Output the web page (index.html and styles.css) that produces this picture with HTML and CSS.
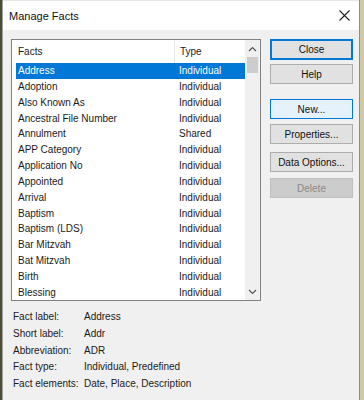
FILE: index.html
```html
<!DOCTYPE html>
<html lang="en">
  <head>
    <meta charset="utf-8">
    <title>Manage Facts</title>
    <link rel="stylesheet" href="styles.css">
  </head>
  <body>
    <div class="dialog">
      <div class="titlebar">
        <span class="title">Manage Facts</span>
        <svg class="close-x" width="11" height="11" viewBox="0 0 11 11">
          <path d="M0.5 0.5 L10.5 10.5 M10.5 0.5 L0.5 10.5" stroke="#222" stroke-width="1.1" fill="none"/>
        </svg>
      </div>
      <div class="content">
        <div class="listbox">
          <div class="list">
            <div class="header">
              <div class="col col-fact">Facts</div>
              <div class="col col-type">Type</div>
            </div>
            <div class="row selected"><div class="col col-fact">Address</div><div class="col col-type">Individual</div></div>
            <div class="row"><div class="col col-fact">Adoption</div><div class="col col-type">Individual</div></div>
            <div class="row"><div class="col col-fact">Also Known As</div><div class="col col-type">Individual</div></div>
            <div class="row"><div class="col col-fact">Ancestral File Number</div><div class="col col-type">Individual</div></div>
            <div class="row"><div class="col col-fact">Annulment</div><div class="col col-type">Shared</div></div>
            <div class="row"><div class="col col-fact">APP Category</div><div class="col col-type">Individual</div></div>
            <div class="row"><div class="col col-fact">Application No</div><div class="col col-type">Individual</div></div>
            <div class="row"><div class="col col-fact">Appointed</div><div class="col col-type">Individual</div></div>
            <div class="row"><div class="col col-fact">Arrival</div><div class="col col-type">Individual</div></div>
            <div class="row"><div class="col col-fact">Baptism</div><div class="col col-type">Individual</div></div>
            <div class="row"><div class="col col-fact">Baptism (LDS)</div><div class="col col-type">Individual</div></div>
            <div class="row"><div class="col col-fact">Bar Mitzvah</div><div class="col col-type">Individual</div></div>
            <div class="row"><div class="col col-fact">Bat Mitzvah</div><div class="col col-type">Individual</div></div>
            <div class="row"><div class="col col-fact">Birth</div><div class="col col-type">Individual</div></div>
            <div class="row"><div class="col col-fact">Blessing</div><div class="col col-type">Individual</div></div>
          </div>
          <div class="scrollbar">
            <div class="arrow">
              <svg width="9" height="6" viewBox="0 0 9 6"><path d="M1 5 L4.5 1.5 L8 5" stroke="#555" stroke-width="1.2" fill="none"/></svg>
            </div>
            <div class="thumb"></div>
            <div class="track"></div>
            <div class="arrow">
              <svg width="9" height="6" viewBox="0 0 9 6"><path d="M1 1 L4.5 4.5 L8 1" stroke="#555" stroke-width="1.2" fill="none"/></svg>
            </div>
          </div>
        </div>
        <div class="buttons">
          <button class="btn btn-default">Close</button>
          <button class="btn btn-help">Help</button>
          <button class="btn btn-hover btn-new">New...</button>
          <button class="btn btn-props">Properties...</button>
          <button class="btn btn-data">Data Options...</button>
          <button class="btn btn-disabled btn-delete">Delete</button>
        </div>
      </div>
      <div class="info">
        <div class="info-row"><span class="info-label">Fact label:</span><span>Address</span></div>
        <div class="info-row"><span class="info-label">Short label:</span><span>Addr</span></div>
        <div class="info-row"><span class="info-label">Abbreviation:</span><span>ADR</span></div>
        <div class="info-row"><span class="info-label">Fact type:</span><span>Individual, Predefined</span></div>
        <div class="info-row"><span class="info-label">Fact elements:</span><span>Date, Place, Description</span></div>
      </div>
    </div>
  </body>
</html>
```

FILE: styles.css
```css
body {
  margin: 0;
  height: 400px;
  overflow: hidden;
  background: linear-gradient(90deg, #4d4d36 0, #4d4d36 2px, #cfc9a6 2px);
  font-family: "Liberation Sans", Arial, sans-serif;
  font-size: 10px;
  color: #1b1b1b;
}

.dialog {
  width: 356px;
  height: 400px;
  margin-left: 2px;
  background: #f0f0f0;
  border-left: 1px solid #a0a0a0;
  border-right: 1px solid #8c8c8c;
}

.titlebar {
  height: 29px;
  background: #fff;
  display: flex;
  align-items: center;
  justify-content: space-between;
  padding: 0 8px 0 6px;
  border-top: 1px solid #e6e6e6;
}
.title { font-size: 11px; color: #111; padding-top: 1px; }
.close-x { margin-right: 1px; }

.content {
  display: flex;
  padding: 9px 0 0 8px;
}

.listbox {
  width: 248px;
  height: 260px;
  border: 1px solid #828282;
  background: #fff;
  display: flex;
  overflow: hidden;
}
.list { flex: 1; padding-left: 4px; }

.header {
  display: flex;
  height: 23px;
  align-items: center;
}
.header .col-fact { border-right: 1px solid #e5e5e5; height: 23px; line-height: 23px; }

.row {
  display: flex;
  height: 15.85px;
  line-height: 15.85px;
  white-space: nowrap;
}
.col { padding-left: 2px; }
.col-fact { width: 156px; }
.col-type { padding-left: 5px; }
.row.selected { background: #0078d7; color: #fff; }

.scrollbar {
  width: 15px;
  background: #f0f0f0;
  display: flex;
  flex-direction: column;
  align-items: center;
}
.arrow {
  height: 17px;
  width: 15px;
  display: flex;
  align-items: center;
  justify-content: center;
}
.thumb { width: 11px; height: 16px; background: #cdcdcd; }
.track { flex: 1; }

.buttons {
  display: flex;
  flex-direction: column;
  margin-left: 9px;
  width: 83px;
}
.btn {
  height: 20px;
  font-family: inherit;
  font-size: 10px;
  color: #111;
  background: #e1e1e1;
  border: 1px solid #adadad;
  padding: 0;
}
.btn-default { border: 2px solid #0078d7; height: 21px; }
.btn-help { margin-top: 4px; }
.btn-new { margin-top: 15px; }
.btn-props { margin-top: 5px; }
.btn-data { margin-top: 8px; }
.btn-delete { margin-top: 6px; }
.btn-hover { background: #e5f1fb; border-color: #0078d7; }
.btn-disabled { background: #cccccc; border-color: #bfbfbf; color: #8a8a8a; }

.info {
  padding: 8px 0 0 10px;
}
.info-row {
  height: 16.8px;
  line-height: 16.8px;
  display: flex;
}
.info-label { width: 71px; }
```
